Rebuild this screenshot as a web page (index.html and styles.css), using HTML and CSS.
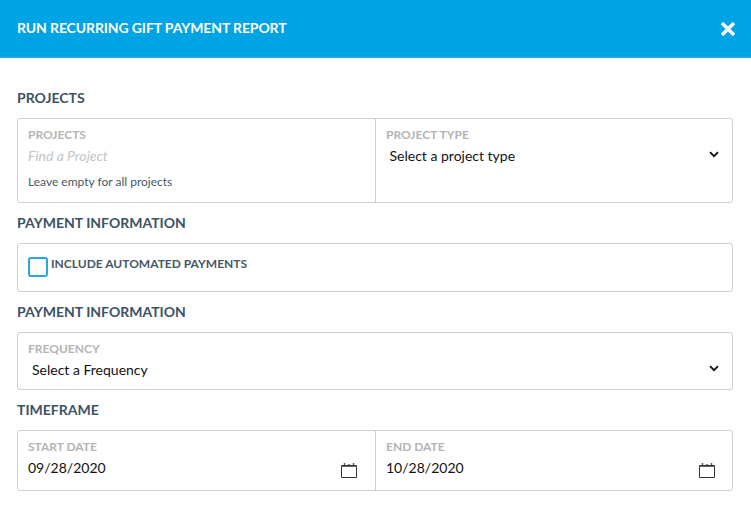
FILE: index.html
```html
<!DOCTYPE html>
<html lang="en">
<head>
<meta charset="utf-8">
<title>Run Recurring Gift Payment Report</title>
<link rel="stylesheet" href="styles.css">
</head>
<body>
<header class="modal-header">
  <h1 class="modal-title">RUN RECURRING GIFT PAYMENT REPORT</h1>
  <svg class="close-icon" viewBox="0 0 16 16" aria-label="Close"><path d="M2 2 L14 14 M14 2 L2 14"/></svg>
</header>
<main class="modal-body">
  <h2 class="section-title section-first">PROJECTS</h2>
  <div class="box box-projects">
    <div class="cell cell-left">
      <div class="field-label">PROJECTS</div>
      <div class="placeholder">Find a Project</div>
      <div class="hint">Leave empty for all projects</div>
    </div>
    <div class="cell cell-right">
      <div class="field-label">PROJECT TYPE</div>
      <div class="select-row">
        <span>Select a project type</span>
        <svg class="chevron" viewBox="0 0 10 7"><path d="M1 1.2 L5 5.2 L9 1.2"/></svg>
      </div>
    </div>
  </div>
  <h2 class="section-title">PAYMENT INFORMATION</h2>
  <div class="box box-check">
    <span class="checkbox"></span>
    <span class="check-label">INCLUDE AUTOMATED PAYMENTS</span>
  </div>
  <h2 class="section-title">PAYMENT INFORMATION</h2>
  <div class="box box-frequency">
    <div class="cell cell-full">
      <div class="field-label">FREQUENCY</div>
      <div class="select-row select-row-wide">
        <span>Select a Frequency</span>
        <svg class="chevron" viewBox="0 0 10 7"><path d="M1 1.2 L5 5.2 L9 1.2"/></svg>
      </div>
    </div>
  </div>
  <h2 class="section-title">TIMEFRAME</h2>
  <div class="box box-dates">
    <div class="cell cell-left">
      <div class="field-label">START DATE</div>
      <div class="date-row">
        <span>09/28/2020</span>
        <svg class="calendar" viewBox="0 0 16 16"><path class="cal-body" d="M0.5 3.5 H15.5 V15.5 H0.5 Z"/><path class="cal-band" d="M0.5 4.5 H15.5"/><path class="cal-rings" d="M3.5 1 V3 M8 2 V3 M12.5 1 V3"/></svg>
      </div>
    </div>
    <div class="cell cell-right">
      <div class="field-label">END DATE</div>
      <div class="date-row date-row-end">
        <span>10/28/2020</span>
        <svg class="calendar" viewBox="0 0 16 16"><path class="cal-body" d="M0.5 3.5 H15.5 V15.5 H0.5 Z"/><path class="cal-band" d="M0.5 4.5 H15.5"/><path class="cal-rings" d="M3.5 1 V3 M8 2 V3 M12.5 1 V3"/></svg>
      </div>
    </div>
  </div>
</main>
</body>
</html>
```

FILE: styles.css
```css
* { box-sizing: border-box; }
html, body { margin: 0; padding: 0; }
body {
  width: 751px;
  height: 505px;
  overflow: hidden;
  background: #fff;
  font-family: Lato, "Open Sans", sans-serif;
  color: #000;
}
.modal-header {
  height: 58px;
  background: #00a3e4;
  border-bottom: 1px solid #35b3e8;
  display: flex;
  align-items: center;
  justify-content: space-between;
  padding: 0 15px 0 17px;
}
.modal-title {
  margin: 0 0 2px;
  font-size: 14px;
  line-height: 20px;
  font-weight: 700;
  letter-spacing: -0.12px;
  color: #fff;
}
.close-icon {
  width: 16px;
  height: 16px;
  margin-top: 1px;
  fill: none;
  stroke: #fff;
  stroke-width: 3.4;
}
.modal-body { padding: 0 18px 0 17px; }
.section-title {
  margin: 0;
  height: 40px;
  padding-top: 10px;
  font-size: 14px;
  line-height: 20px;
  font-weight: 700;
  color: #3c5366;
}
.section-first { height: 60px; padding-top: 30px; }
.box {
  display: flex;
  border: 1px solid #cfcfcf;
  border-radius: 3px;
}
.box-projects { height: 85px; }
.box-check { height: 49px; padding: 13px 10px 0; align-items: flex-start; }
.box-frequency { height: 58px; }
.box-dates { height: 61px; }
.cell { padding: 8px 10px 0; }
.cell-left { width: 358px; border-right: 1px solid #cfcfcf; }
.cell-right { flex: 1; }
.cell-full { flex: 1; }
.field-label {
  font-size: 12px;
  line-height: 16px;
  font-weight: 700;
  color: #b4b4b4;
}
.placeholder {
  margin-top: 3px;
  font-size: 14px;
  line-height: 20px;
  font-style: italic;
  color: #c4c4c4;
}
.hint {
  margin-top: 8px;
  font-size: 12px;
  line-height: 16px;
  color: #465866;
}
.select-row, .date-row {
  display: flex;
  align-items: center;
  justify-content: space-between;
  font-size: 14px;
  line-height: 20px;
  color: #111;
}
.select-row { margin-top: 3px; padding: 0 3px 0 3.5px; }
.select-row-wide { padding-left: 4px; }
.date-row { margin-top: 2px; padding-right: 8px; }
.date-row-end { padding-right: 7px; }
.chevron {
  width: 10px;
  height: 7px;
  margin-top: -3px;
  fill: none;
  stroke: #111;
  stroke-width: 1.9;
}
.calendar {
  width: 16px;
  height: 16px;
  margin-top: 5px;
  fill: none;
  stroke: #333;
}
.cal-body { stroke-width: 1; }
.cal-band { stroke-width: 1; stroke: #666; }
.cal-rings { stroke-width: 1.4; stroke: #555; }
.checkbox {
  width: 20px;
  height: 20px;
  flex: none;
  border: 2px solid #2ba5e6;
  border-radius: 3px;
}
.check-label {
  margin-left: 3px;
  font-size: 12px;
  line-height: 14px;
  font-weight: 700;
  color: #465866;
}
```
